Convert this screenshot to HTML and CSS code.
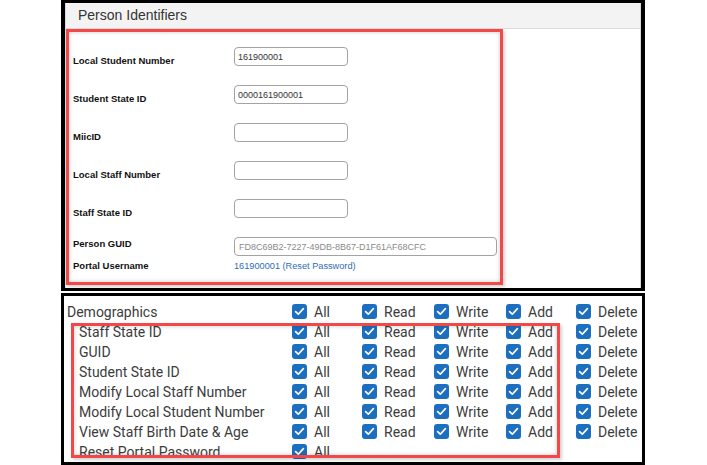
FILE: index.html
```html
<!DOCTYPE html>
<html>
<head>
<meta charset="utf-8">
<link rel="stylesheet" href="styles.css">
</head>
<body>
<div class="page">
  <section class="panel panel-top">
    <div class="inner">
      <div class="hdr">Person Identifiers</div>
      <div class="form">
        <div class="row"><label class="lbl">Local Student Number</label><input class="field" value="161900001" readonly></div>
        <div class="row"><label class="lbl">Student State ID</label><input class="field" value="0000161900001" readonly></div>
        <div class="row"><label class="lbl">MiicID</label><input class="field" value="" readonly></div>
        <div class="row"><label class="lbl">Local Staff Number</label><input class="field" value="" readonly></div>
        <div class="row"><label class="lbl">Staff State ID</label><input class="field" value="" readonly></div>
        <div class="row row-guid"><label class="lbl">Person GUID</label><input class="field field-wide" value="FD8C69B2-7227-49DB-8B67-D1F61AF68CFC" readonly></div>
        <div class="row row-portal"><span class="lbl">Portal Username</span><span class="link">161900001 (Reset Password)</span></div>
      </div>
    </div>
    <div class="annot annot-top"></div>
  </section>

  <section class="panel panel-bottom">
    <div class="perm-row">
      <span class="name">Demographics</span>
      <span class="cell"><i class="cb"><svg viewBox="0 0 15 15"><path d="M3.6 7.6 L6.3 10.2 L11.4 4.6"/></svg></i>All</span>
      <span class="cell"><i class="cb"><svg viewBox="0 0 15 15"><path d="M3.6 7.6 L6.3 10.2 L11.4 4.6"/></svg></i>Read</span>
      <span class="cell"><i class="cb"><svg viewBox="0 0 15 15"><path d="M3.6 7.6 L6.3 10.2 L11.4 4.6"/></svg></i>Write</span>
      <span class="cell"><i class="cb"><svg viewBox="0 0 15 15"><path d="M3.6 7.6 L6.3 10.2 L11.4 4.6"/></svg></i>Add</span>
      <span class="cell"><i class="cb"><svg viewBox="0 0 15 15"><path d="M3.6 7.6 L6.3 10.2 L11.4 4.6"/></svg></i>Delete</span>
    </div>
    <div class="perm-row child">
      <span class="name">Staff State ID</span>
      <span class="cell"><i class="cb"><svg viewBox="0 0 15 15"><path d="M3.6 7.6 L6.3 10.2 L11.4 4.6"/></svg></i>All</span>
      <span class="cell"><i class="cb"><svg viewBox="0 0 15 15"><path d="M3.6 7.6 L6.3 10.2 L11.4 4.6"/></svg></i>Read</span>
      <span class="cell"><i class="cb"><svg viewBox="0 0 15 15"><path d="M3.6 7.6 L6.3 10.2 L11.4 4.6"/></svg></i>Write</span>
      <span class="cell"><i class="cb"><svg viewBox="0 0 15 15"><path d="M3.6 7.6 L6.3 10.2 L11.4 4.6"/></svg></i>Add</span>
      <span class="cell"><i class="cb"><svg viewBox="0 0 15 15"><path d="M3.6 7.6 L6.3 10.2 L11.4 4.6"/></svg></i>Delete</span>
    </div>
    <div class="perm-row child">
      <span class="name">GUID</span>
      <span class="cell"><i class="cb"><svg viewBox="0 0 15 15"><path d="M3.6 7.6 L6.3 10.2 L11.4 4.6"/></svg></i>All</span>
      <span class="cell"><i class="cb"><svg viewBox="0 0 15 15"><path d="M3.6 7.6 L6.3 10.2 L11.4 4.6"/></svg></i>Read</span>
      <span class="cell"><i class="cb"><svg viewBox="0 0 15 15"><path d="M3.6 7.6 L6.3 10.2 L11.4 4.6"/></svg></i>Write</span>
      <span class="cell"><i class="cb"><svg viewBox="0 0 15 15"><path d="M3.6 7.6 L6.3 10.2 L11.4 4.6"/></svg></i>Add</span>
      <span class="cell"><i class="cb"><svg viewBox="0 0 15 15"><path d="M3.6 7.6 L6.3 10.2 L11.4 4.6"/></svg></i>Delete</span>
    </div>
    <div class="perm-row child">
      <span class="name">Student State ID</span>
      <span class="cell"><i class="cb"><svg viewBox="0 0 15 15"><path d="M3.6 7.6 L6.3 10.2 L11.4 4.6"/></svg></i>All</span>
      <span class="cell"><i class="cb"><svg viewBox="0 0 15 15"><path d="M3.6 7.6 L6.3 10.2 L11.4 4.6"/></svg></i>Read</span>
      <span class="cell"><i class="cb"><svg viewBox="0 0 15 15"><path d="M3.6 7.6 L6.3 10.2 L11.4 4.6"/></svg></i>Write</span>
      <span class="cell"><i class="cb"><svg viewBox="0 0 15 15"><path d="M3.6 7.6 L6.3 10.2 L11.4 4.6"/></svg></i>Add</span>
      <span class="cell"><i class="cb"><svg viewBox="0 0 15 15"><path d="M3.6 7.6 L6.3 10.2 L11.4 4.6"/></svg></i>Delete</span>
    </div>
    <div class="perm-row child">
      <span class="name">Modify Local Staff Number</span>
      <span class="cell"><i class="cb"><svg viewBox="0 0 15 15"><path d="M3.6 7.6 L6.3 10.2 L11.4 4.6"/></svg></i>All</span>
      <span class="cell"><i class="cb"><svg viewBox="0 0 15 15"><path d="M3.6 7.6 L6.3 10.2 L11.4 4.6"/></svg></i>Read</span>
      <span class="cell"><i class="cb"><svg viewBox="0 0 15 15"><path d="M3.6 7.6 L6.3 10.2 L11.4 4.6"/></svg></i>Write</span>
      <span class="cell"><i class="cb"><svg viewBox="0 0 15 15"><path d="M3.6 7.6 L6.3 10.2 L11.4 4.6"/></svg></i>Add</span>
      <span class="cell"><i class="cb"><svg viewBox="0 0 15 15"><path d="M3.6 7.6 L6.3 10.2 L11.4 4.6"/></svg></i>Delete</span>
    </div>
    <div class="perm-row child">
      <span class="name">Modify Local Student Number</span>
      <span class="cell"><i class="cb"><svg viewBox="0 0 15 15"><path d="M3.6 7.6 L6.3 10.2 L11.4 4.6"/></svg></i>All</span>
      <span class="cell"><i class="cb"><svg viewBox="0 0 15 15"><path d="M3.6 7.6 L6.3 10.2 L11.4 4.6"/></svg></i>Read</span>
      <span class="cell"><i class="cb"><svg viewBox="0 0 15 15"><path d="M3.6 7.6 L6.3 10.2 L11.4 4.6"/></svg></i>Write</span>
      <span class="cell"><i class="cb"><svg viewBox="0 0 15 15"><path d="M3.6 7.6 L6.3 10.2 L11.4 4.6"/></svg></i>Add</span>
      <span class="cell"><i class="cb"><svg viewBox="0 0 15 15"><path d="M3.6 7.6 L6.3 10.2 L11.4 4.6"/></svg></i>Delete</span>
    </div>
    <div class="perm-row child">
      <span class="name">View Staff Birth Date &amp; Age</span>
      <span class="cell"><i class="cb"><svg viewBox="0 0 15 15"><path d="M3.6 7.6 L6.3 10.2 L11.4 4.6"/></svg></i>All</span>
      <span class="cell"><i class="cb"><svg viewBox="0 0 15 15"><path d="M3.6 7.6 L6.3 10.2 L11.4 4.6"/></svg></i>Read</span>
      <span class="cell"><i class="cb"><svg viewBox="0 0 15 15"><path d="M3.6 7.6 L6.3 10.2 L11.4 4.6"/></svg></i>Write</span>
      <span class="cell"><i class="cb"><svg viewBox="0 0 15 15"><path d="M3.6 7.6 L6.3 10.2 L11.4 4.6"/></svg></i>Add</span>
      <span class="cell"><i class="cb"><svg viewBox="0 0 15 15"><path d="M3.6 7.6 L6.3 10.2 L11.4 4.6"/></svg></i>Delete</span>
    </div>
    <div class="perm-row child">
      <span class="name">Reset Portal Password</span>
      <span class="cell"><i class="cb"><svg viewBox="0 0 15 15"><path d="M3.6 7.6 L6.3 10.2 L11.4 4.6"/></svg></i>All</span>
    </div>
    <div class="annot annot-bottom"></div>
  </section>
</div>
</body>
</html>
```

FILE: styles.css
```css
* { box-sizing: border-box; }
html, body { margin: 0; background: #fff; }
body { font-family: "Liberation Sans", Arial, sans-serif; }

.page {
  margin-left: 61px;
  width: 584px;
  display: flex;
  flex-direction: column;
  gap: 2px;
}

.panel {
  position: relative;
  border: solid #000;
  background: #fff;
}

.panel-top {
  height: 291px;
  border-width: 3px 4px 3px 4px;
}

.inner {
  height: 100%;
  border-left: 1px solid #dadada;
  border-right: 1px solid #dadada;
}

.hdr {
  height: 26px;
  background: #f3f3f3;
  border-bottom: 1px solid #dcdcdc;
  padding-left: 12px;
  font-size: 14px;
  line-height: 25px;
  color: #333;
}

.form {
  padding: 18px 0 0 7px;
  display: flex;
  flex-direction: column;
}

.row {
  display: flex;
  align-items: flex-start;
  height: 19px;
  margin-bottom: 19px;
}

.lbl {
  width: 161px;
  flex: none;
  padding-top: 8px;
  font-size: 9.5px;
  font-weight: bold;
  line-height: 12px;
  color: #111;
}

.field {
  width: 114px;
  height: 19px;
  margin: 0;
  border: 1px solid #a3a3a3;
  border-radius: 4px;
  padding: 0 3px;
  font-family: "Liberation Sans", Arial, sans-serif;
  font-size: 9px;
  color: #333;
  background: #fff;
  outline: none;
}

.field-wide {
  width: 263px;
  padding-left: 4px;
  color: #8a8a8a;
}

.row-guid { margin-bottom: 4px; }
.row-guid .lbl { padding-top: 1px; }

.row-portal { height: 12px; margin-bottom: 0; }
.row-portal .lbl { padding-top: 0; }

.link {
  font-size: 9.2px;
  line-height: 12px;
  color: #2f6db6;
}

.annot {
  position: absolute;
  border: 3px solid #f24848;
  box-shadow: inset 0 0 4px rgba(0, 0, 0, 0.22), 2px 2px 3px rgba(0, 0, 0, 0.18);
  pointer-events: none;
}

.annot-top {
  left: 1px;
  top: 26px;
  width: 437px;
  height: 256px;
}

.panel-bottom {
  height: 172px;
  border-width: 3px;
  padding: 6px 0 0 3px;
  overflow: hidden;
  font-family: Roboto, "Liberation Sans", Arial, sans-serif;
  font-size: 14px;
  color: #3c3c3c;
}

.perm-row {
  display: grid;
  grid-template-columns: 225px 70px 72px 72px 70px 1fr;
  height: 20px;
  align-items: center;
  line-height: 20px;
  white-space: nowrap;
}

.child .name { padding-left: 12px; }

.cell {
  display: flex;
  align-items: center;
  gap: 7px;
}

.cb {
  display: block;
  width: 15px;
  height: 15px;
  border-radius: 3px;
  background: #1c6ebe;
  margin-top: -2px;
}

.cb svg {
  display: block;
  width: 15px;
  height: 15px;
}

.cb path {
  fill: none;
  stroke: #fff;
  stroke-width: 1.7;
  stroke-linecap: round;
  stroke-linejoin: round;
}

.annot-bottom {
  left: 7px;
  top: 27px;
  width: 489px;
  height: 135px;
}
```
